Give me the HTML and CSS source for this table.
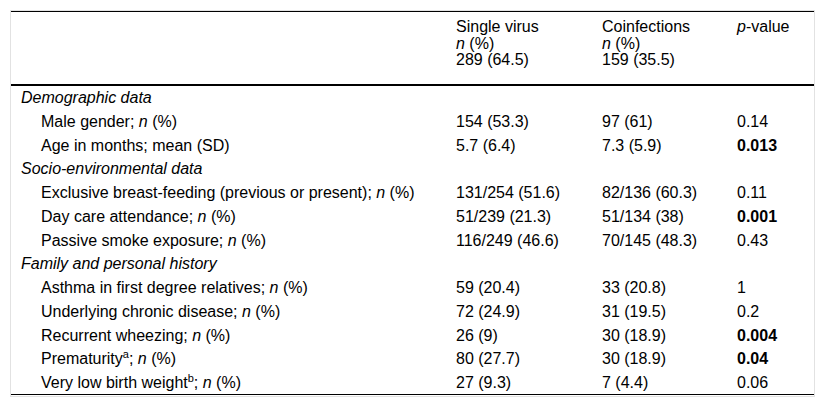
FILE: index.html
```html
<!DOCTYPE html>
<html>
<head>
<meta charset="utf-8">
<link rel="stylesheet" href="styles.css">
</head>
<body>
<div class="frame">
<table class="tbl">
<colgroup>
<col class="c1"><col class="c2"><col class="c3"><col class="c4">
</colgroup>
<thead>
<tr>
<th></th>
<th>Single virus<br><i>n</i> (%)<br>289 (64.5)</th>
<th>Coinfections<br><i>n</i> (%)<br>159 (35.5)</th>
<th><i>p</i>-value</th>
</tr>
</thead>
<tbody>
<tr class="sec"><td colspan="4"><i>Demographic data</i></td></tr>
<tr><td class="ind">Male gender; <i>n</i> (%)</td><td>154 (53.3)</td><td>97 (61)</td><td>0.14</td></tr>
<tr><td class="ind">Age in months; mean (SD)</td><td>5.7 (6.4)</td><td>7.3 (5.9)</td><td><b>0.013</b></td></tr>
<tr class="sec"><td colspan="4"><i>Socio-environmental data</i></td></tr>
<tr><td class="ind">Exclusive breast-feeding (previous or present); <i>n</i> (%)</td><td>131/254 (51.6)</td><td>82/136 (60.3)</td><td>0.11</td></tr>
<tr><td class="ind">Day care attendance; <i>n</i> (%)</td><td>51/239 (21.3)</td><td>51/134 (38)</td><td><b>0.001</b></td></tr>
<tr><td class="ind">Passive smoke exposure; <i>n</i> (%)</td><td>116/249 (46.6)</td><td>70/145 (48.3)</td><td>0.43</td></tr>
<tr class="sec"><td colspan="4"><i>Family and personal history</i></td></tr>
<tr><td class="ind">Asthma in first degree relatives; <i>n</i> (%)</td><td>59 (20.4)</td><td>33 (20.8)</td><td>1</td></tr>
<tr><td class="ind">Underlying chronic disease; <i>n</i> (%)</td><td>72 (24.9)</td><td>31 (19.5)</td><td>0.2</td></tr>
<tr><td class="ind">Recurrent wheezing; <i>n</i> (%)</td><td>26 (9)</td><td>30 (18.9)</td><td><b>0.004</b></td></tr>
<tr><td class="ind">Prematurity<sup>a</sup>; <i>n</i> (%)</td><td>80 (27.7)</td><td>30 (18.9)</td><td><b>0.04</b></td></tr>
<tr><td class="ind">Very low birth weight<sup>b</sup>; <i>n</i> (%)</td><td>27 (9.3)</td><td>7 (4.4)</td><td>0.06</td></tr>
</tbody>
</table>
</div>
</body>
</html>
```
FILE: styles.css
```css
html, body {
  margin: 0;
  padding: 0;
  background: #fff;
}
body {
  padding: 10px;
  font-family: "Liberation Sans", Arial, sans-serif;
  font-size: 16px;
  color: #000;
}
.frame {
  border: 1px solid #e2e2e2;
  width: 803px;
  height: 385px;
  overflow: hidden;
}
.tbl {
  width: 803px;
  border-collapse: collapse;
  table-layout: fixed;
  border-top: 1px solid #000;
  border-bottom: 1px solid #000;
}
.c1 { width: 435px; }
.c2 { width: 146px; }
.c3 { width: 135px; }
.c4 { width: 87px; }
.tbl th {
  font-weight: normal;
  text-align: left;
  vertical-align: top;
  line-height: 16.5px;
  padding: 7px 10px 15px 10px;
  border-bottom: 2px solid #000;
}
.tbl td {
  text-align: left;
  vertical-align: middle;
  line-height: 18px;
  padding: 3.5px 10px 2.25px 10px;
  white-space: nowrap;
}
.tbl td.ind {
  padding-left: 30px;
}
.tbl sup {
  font-size: 11px;
  line-height: 0;
  vertical-align: 6px;
}
```
